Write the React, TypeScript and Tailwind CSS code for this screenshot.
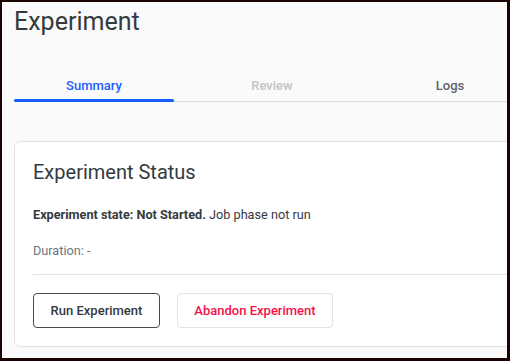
const tabs = [
  { label: "Summary", state: "active" },
  { label: "Review", state: "disabled" },
  { label: "Logs", state: "idle" },
];

export default function App() {
  return (
    <div className="h-[361px] w-[510px] overflow-hidden border-t-2 border-l-2 border-r-[3px] border-b-[3px] border-[#1c0303] bg-[#fafafa] font-['Roboto',sans-serif]">
      <div className="pl-3">
        <h1 className="pt-[4px] text-[25px] leading-[32px] font-normal text-[#343a40]">
          Experiment
        </h1>

        <div className="mt-[40px] flex w-[600px] gap-[18px] border-b border-[#dcdce4]">
          {tabs.map((tab) => (
            <div
              className={
                "relative w-[160px] pb-[7px] text-center text-[13px] leading-[16px] font-medium " +
                (tab.state === "active"
                  ? "text-[#1f5cff]"
                  : tab.state === "disabled"
                    ? "text-[#c4c4c4]"
                    : "text-[#5f6368]")
              }
              key={tab.label}
            >
              {tab.label}
              {tab.state === "active" ? (
                <span className="absolute inset-x-0 -bottom-px h-[3px] rounded-full bg-[#1760ff]" />
              ) : null}
            </div>
          ))}
        </div>

        <div className="mt-[39px] w-[540px] rounded-[6px] border border-[#e2e2e6] bg-white px-[18px] pt-[17px] pb-[18px]">
          <h2 className="text-[20px] leading-[26px] font-normal text-[#343a40]">
            Experiment Status
          </h2>
          <p className="mt-[22px] text-[12.7px] leading-[16px] text-[#343a40]">
            <span className="font-bold">Experiment state: Not Started.</span>{" "}
            Job phase not run
          </p>
          <p className="mt-[20px] text-[12.7px] leading-[16px] text-[#6c757d]">
            Duration: -
          </p>
          <div className="mt-[15px] border-t border-[#e0e0e8]" />
          <div className="mt-[18px] flex gap-[17px]">
            <button
              className="h-[35px] w-[127px] rounded-[4px] border border-[#4a4a4a] bg-white text-[13px] font-medium text-[#343a40]"
              type="button"
            >
              Run Experiment
            </button>
            <button
              className="h-[35px] w-[156px] rounded-[4px] border border-[#e2e2e8] bg-white text-[13px] font-medium text-[#f50f4b]"
              type="button"
            >
              Abandon Experiment
            </button>
          </div>
        </div>
      </div>
    </div>
  );
}
